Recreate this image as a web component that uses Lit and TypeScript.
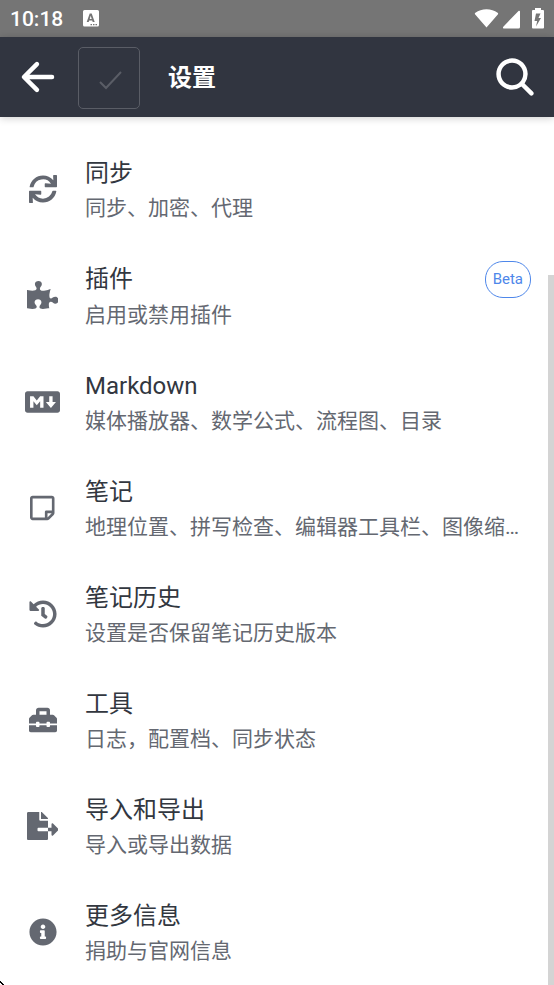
import { LitElement, html, css, svg } from "lit";
import { customElement, property, state } from "lit/decorators.js";

interface Icon {
  width: number;
  height: number;
  path: string;
}

interface Section {
  title: string;
  description: string;
  icon: string;
  badge?: string;
}

const ICONS: Record<string, Icon> = {
  sync: {
    width: 512,
    height: 512,
    path: "M440.65 12.57l4 82.77A247.16 247.16 0 0 0 255.83 8C134.73 8 33.91 94.92 12.29 209.82A12 12 0 0 0 24.09 224h49.05a12 12 0 0 0 11.67-9.26 175.91 175.91 0 0 1 317-56.94l-101.46-4.86a12 12 0 0 0-12.57 12v47.41a12 12 0 0 0 12 12H500a12 12 0 0 0 12-12V12a12 12 0 0 0-12-12h-47.37a12 12 0 0 0-11.98 12.57zM255.83 432a175.61 175.61 0 0 1-146-77.8l101.8 4.87a12 12 0 0 0 12.57-12v-47.4a12 12 0 0 0-12-12H12a12 12 0 0 0-12 12V500a12 12 0 0 0 12 12h47.35a12 12 0 0 0 12-12.6l-4.15-82.57A247.17 247.17 0 0 0 255.83 504c121.11 0 221.93-86.92 243.55-201.82a12 12 0 0 0-11.8-14.18h-49.05a12 12 0 0 0-11.67 9.26A175.86 175.86 0 0 1 255.83 432z",
  },
  puzzle: {
    width: 576,
    height: 512,
    path: "M519.442 288.651c-41.519 0-59.5 31.593-82.058 31.593C377.409 320.244 432 144 432 144s-196.288 80-196.288-3.297c0-35.827 36.288-46.25 36.288-85.985C272 19.216 243.885 0 210.539 0c-34.654 0-66.366 18.891-66.366 56.346 0 41.364 31.711 59.277 31.711 81.75C175.885 207.719 0 166.758 0 166.758v333.237s178.635 41.047 178.635-28.662c0-22.473-40-40.107-40-81.471 0-37.456 29.25-56.346 63.577-56.346 33.673 0 61.788 19.216 61.788 54.717 0 39.735-36.288 50.158-36.288 85.985 0 60.803 129.675 25.73 181.23 25.73 0 0-34.725-120.101 25.827-120.101 35.962 0 46.423 36.152 86.308 36.152C556.712 416 576 387.99 576 354.443c0-34.199-18.962-65.792-56.558-65.792z",
  },
  markdown: {
    width: 640,
    height: 512,
    path: "M593.8 59.1H46.2C20.7 59.1 0 79.8 0 105.2v301.5c0 25.5 20.7 46.2 46.2 46.2h547.7c25.5 0 46.2-20.7 46.1-46.1V105.2c0-25.4-20.7-46.1-46.2-46.1zM338.5 360.6H277v-120l-61.5 76.9-61.5-76.9v120H92.3V151.4h61.5l61.5 76.9 61.5-76.9h61.5v209.2zm135.3 3.1L381.5 256H443V151.4h61.5V256H566z",
  },
  note: {
    width: 448,
    height: 512,
    path: "M448 348.106V80c0-26.51-21.49-48-48-48H48C21.49 32 0 53.49 0 80v351.988c0 26.51 21.49 48 48 48h268.118a48 48 0 0 0 33.941-14.059l83.882-83.882A48 48 0 0 0 448 348.106zm-128 80.005v-76.118h76.118L320 428.111zM400 80v223.989H296c-13.255 0-24 10.745-24 24v104H48V80h352z",
  },
  history: {
    width: 512,
    height: 512,
    path: "M504 255.531c.253 136.64-111.18 248.372-247.82 248.468-59.015.042-113.223-20.53-155.822-54.911-11.077-8.94-11.905-25.541-1.839-35.607l11.267-11.267c8.609-8.609 22.353-9.551 31.891-1.984C173.062 425.135 212.781 440 256 440c101.705 0 184-82.311 184-184 0-101.705-82.311-184-184-184-48.814 0-93.149 18.969-126.068 49.932l50.754 50.754c10.08 10.08 2.941 27.314-11.313 27.314H24c-8.837 0-16-7.163-16-16V38.627c0-14.254 17.234-21.393 27.314-11.314l49.372 49.372C129.209 34.136 189.552 8 256 8c136.81 0 247.747 110.78 248 247.531zm-180.912 78.784l9.823-12.63c8.138-10.463 6.253-25.542-4.21-33.679L288 256.349V152c0-13.255-10.745-24-24-24h-16c-13.255 0-24 10.745-24 24v135.651l65.409 50.874c10.463 8.137 25.541 6.253 33.679-4.21z",
  },
  toolbox: {
    width: 512,
    height: 512,
    path: "M502.63 214.63l-45.25-45.25c-6-6-14.14-9.37-22.63-9.37H384V80c0-26.51-21.49-48-48-48H176c-26.51 0-48 21.49-48 48v80H77.25c-8.49 0-16.62 3.37-22.63 9.37L9.37 214.63c-6 6-9.37 14.14-9.37 22.63V320h128v-16c0-8.84 7.16-16 16-16h32c8.84 0 16 7.16 16 16v16h128v-16c0-8.84 7.16-16 16-16h32c8.84 0 16 7.16 16 16v16h128v-82.75c0-8.48-3.37-16.62-9.37-22.62zM320 160H192V96h128v64zm64 208c0 8.84-7.16 16-16 16h-32c-8.84 0-16-7.16-16-16v-16H192v16c0 8.84-7.16 16-16 16h-32c-8.84 0-16-7.16-16-16v-16H0v96c0 17.67 14.33 32 32 32h448c17.67 0 32-14.33 32-32v-96H384v16z",
  },
  export: {
    width: 576,
    height: 512,
    path: "M384 121.9c0-6.3-2.5-12.4-7-16.9L279.1 7c-4.5-4.5-10.6-7-17-7H256v128h128zM571 308l-95.7-96.4c-10.1-10.1-27.4-3-27.4 11.3V288h-64v64h64v65.2c0 14.3 17.3 21.4 27.4 11.3L571 332c6.6-6.6 6.6-17.4 0-24zm-379 28v-32c0-8.8 7.2-16 16-16h176V160H248c-13.2 0-24-10.8-24-24V0H24C10.7 0 0 10.7 0 24v464c0 13.3 10.7 24 24 24h336c13.3 0 24-10.7 24-24V352H208c-8.8 0-16-7.2-16-16z",
  },
  info: {
    width: 512,
    height: 512,
    path: "M256 8C119.043 8 8 119.083 8 256c0 136.997 111.043 248 248 248s248-111.003 248-248C504 119.083 392.957 8 256 8zm0 110c23.196 0 42 18.804 42 42s-18.804 42-42 42-42-18.804-42-42 18.804-42 42-42zm56 254c0 6.627-5.373 12-12 12h-88c-6.627 0-12-5.373-12-12v-24c0-6.627 5.373-12 12-12h12v-64h-12c-6.627 0-12-5.373-12-12v-24c0-6.627 5.373-12 12-12h64c6.627 0 12 5.373 12 12v100h12c6.627 0 12 5.373 12 12v24z",
  },
};

const SECTIONS: Section[] = [
  { title: "同步", description: "同步、加密、代理", icon: "sync" },
  { title: "插件", description: "启用或禁用插件", icon: "puzzle", badge: "Beta" },
  { title: "Markdown", description: "媒体播放器、数学公式、流程图、目录", icon: "markdown" },
  { title: "笔记", description: "地理位置、拼写检查、编辑器工具栏、图像缩…", icon: "note" },
  { title: "笔记历史", description: "设置是否保留笔记历史版本", icon: "history" },
  { title: "工具", description: "日志，配置档、同步状态", icon: "toolbox" },
  { title: "导入和导出", description: "导入或导出数据", icon: "export" },
  { title: "更多信息", description: "捐助与官网信息", icon: "info" },
];

@customElement("status-bar")
class StatusBar extends LitElement {
  static styles = css`
    :host {
      display: flex;
      align-items: center;
      gap: 20px;
      flex: none;
      height: 37px;
      padding: 0 8px 0 10px;
      background: #757575;
      color: #fff;
      font: 500 21px/37px Roboto, sans-serif;
    }
    .time {
      padding-top: 2px;
    }
    .system {
      display: flex;
      align-items: center;
      margin-left: auto;
    }
    svg {
      display: block;
    }
  `;

  render() {
    return html`
      <span class="time">10:18</span>
      <svg width="16" height="17" viewBox="0 0 16 17" aria-hidden="true">
        <path
          fill="#fff"
          fill-rule="evenodd"
          d="M1.500 0h13a1.500 1.500 0 0 1 1.500 1.500v13.500a1.500 1.500 0 0 1-1.500 1.500h-13a1.500 1.500 0 0 1-1.500-1.500v-13.500a1.500 1.500 0 0 1 1.500-1.500zM6.700 3.500 3.700 12h2l.5-1.600h3L9.700 12h2L8.700 3.500zM7.700 5.800l1 3.100h-2zM7.500 14h1.500v1.200h-1.500zM10 14h1.500v1.200H10zM12.500 14h1.500v1.200h-1.500z"
        />
      </svg>
      <div class="system">
        <svg width="72" height="22" viewBox="0 0 72 22" fill="#fff" aria-hidden="true">
          <path d="M12.500 19.500 1.200 6.500C0.600 5.700 0.800 5.200 1.400 4.800 4.500 2.500 8.300 1.300 12.500 1.300s8 1.200 11.100 3.500c.6.4.8.9.2 1.700z" />
          <path d="M46 3.500V19a1.500 1.500 0 0 1-1.500 1.500H30c-1 0-1.400-1.100-.7-1.800L44.500 3c.6-.6 1.500-.4 1.500.5z" />
          <path
            fill-rule="evenodd"
            d="M61 0h6v2h2a1 1 0 0 1 1 1v16.500a1 1 0 0 1-1 1H59a1 1 0 0 1-1-1V3a1 1 0 0 1 1-1h2zM62 5.500l-1.500 7.500h2.700L62 18.500l5-8.500h-2.500l2-4.500z"
          />
        </svg>
      </div>
    `;
  }
}

@customElement("screen-header")
class ScreenHeader extends LitElement {
  @property() heading = "";
  @property({ type: Boolean }) dirty = false;

  static styles = css`
    :host {
      display: flex;
      align-items: center;
      flex: none;
      height: 80px;
      padding: 2px 16px 0 15px;
      box-sizing: border-box;
      background: #313540;
      color: #fff;
      box-shadow: 0 1px 8px rgba(0, 0, 0, 0.2);
      z-index: 1;
    }
    button {
      display: grid;
      place-items: center;
      flex: none;
      padding: 0 0 2px;
      border: 0;
      background: none;
      color: inherit;
    }
    svg {
      display: block;
    }
    .save {
      width: 62px;
      height: 62px;
      margin-left: 17px;
      padding: 5px 0 0 3px;
      box-sizing: border-box;
      border: 1px solid #5a5d66;
      border-radius: 5px;
    }
    .save:disabled {
      color: #5a5d66;
    }
    .heading {
      flex: 1;
      margin: 0 0 0 28px;
      font: 700 24px/36px Roboto, "Noto Sans CJK SC", sans-serif;
    }
  `;

  render() {
    return html`
      <button aria-label="返回">
        <svg width="46" height="46" viewBox="0 0 512 512" fill="none" stroke="currentColor" stroke-width="50" stroke-linecap="round" stroke-linejoin="round">
          <path d="M244 400 100 256l144-144M120 256h292" />
        </svg>
      </button>
      <button class="save" aria-label="保存" ?disabled=${!this.dirty}>
        <svg width="24" height="22" viewBox="0 0 24 22" fill="none" stroke="currentColor" stroke-width="2">
          <path d="M1 12l6 6L22 2" />
        </svg>
      </button>
      <h1 class="heading">${this.heading}</h1>
      <button aria-label="搜索">
        <svg width="46" height="46" viewBox="0 0 512 512" fill="currentColor">
          <path d="M456.69 421.39 362.6 327.3a173.81 173.81 0 0 0 34.84-104.58C397.44 126.38 319.06 48 222.72 48S48 126.38 48 222.72s78.38 174.72 174.72 174.72A173.81 173.81 0 0 0 327.3 362.6l94.09 94.09a25 25 0 0 0 35.3-35.3zM97.92 222.72a124.8 124.8 0 1 1 124.8 124.8 124.95 124.95 0 0 1-124.8-124.8z" />
        </svg>
      </button>
    `;
  }
}

@customElement("section-row")
class SectionRow extends LitElement {
  @property({ attribute: false }) section!: Section;

  static styles = css`
    :host {
      display: block;
    }
    .row {
      display: grid;
      grid-template-columns: 85px minmax(0, 1fr);
      align-items: center;
      width: 100%;
      padding: 18px 23px 18px 0;
      border: 0;
      background: none;
      color: #32373f;
      font-family: Roboto, "Noto Sans CJK SC", sans-serif;
      font-weight: 400;
      text-align: left;
    }
    .icon {
      display: block;
      height: 28px;
      margin: 0 auto 3px;
      fill: #646871;
    }
    .text {
      display: block;
    }
    .top {
      display: flex;
      align-items: flex-start;
      justify-content: space-between;
    }
    .title {
      font-size: 24px;
      line-height: 36px;
    }
    .description {
      display: block;
      overflow: hidden;
      color: #646871;
      font-size: 21px;
      line-height: 34px;
      text-overflow: ellipsis;
      white-space: nowrap;
    }
    .badge {
      padding: 0 7px;
      border: 1px solid #4e87ea;
      border-radius: 18px;
      color: #4e87ea;
      font-size: 15px;
      line-height: 35px;
    }
  `;

  render() {
    const { title, description, icon, badge } = this.section;
    const glyph = ICONS[icon];
    return html`
      <button class="row">
        <svg class="icon" viewBox="0 0 ${glyph.width} ${glyph.height}" aria-hidden="true">
          ${svg`<path d=${glyph.path} />`}
        </svg>
        <span class="text">
          <span class="top">
            <span class="title">${title}</span>
            ${badge ? html`<span class="badge">${badge}</span>` : ""}
          </span>
          <span class="description">${description}</span>
        </span>
      </button>
    `;
  }
}

@customElement("app-root")
class AppRoot extends LitElement {
  @state() private sections = SECTIONS;

  static styles = css`
    :host {
      display: flex;
      flex-direction: column;
      height: 100vh;
      background: #fff;
    }
    .body {
      position: relative;
      flex: 1;
      min-height: 0;
    }
    .list {
      height: 100%;
      box-sizing: border-box;
      padding-top: 20px;
      overflow-y: auto;
      scrollbar-width: none;
    }
    .thumb {
      position: absolute;
      right: 0;
      bottom: 0;
      width: 6px;
      height: 710px;
      max-height: 100%;
      background: #d4d4d4;
    }
    .pointer {
      position: absolute;
      left: 0;
      bottom: 0;
    }
  `;

  render() {
    return html`
      <status-bar></status-bar>
      <screen-header heading="设置"></screen-header>
      <main class="body">
        <div class="list">
          ${this.sections.map((s) => html`<section-row .section=${s}></section-row>`)}
        </div>
        <div class="thumb"></div>
        <svg class="pointer" width="4" height="4" viewBox="0 0 4 4" aria-hidden="true">
          <path d="M0 0h1v1h1v1h1v1h1v1H2V3H1V2H0z" />
        </svg>
      </main>
    `;
  }
}
